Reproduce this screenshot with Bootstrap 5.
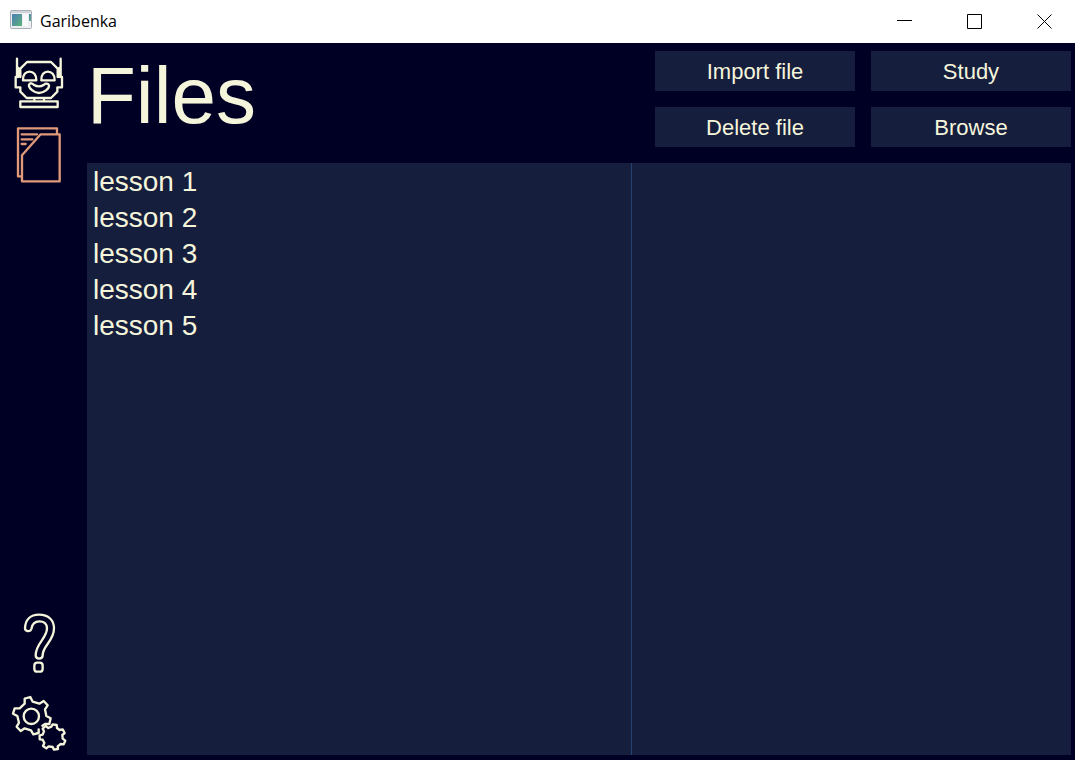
<!DOCTYPE html>
<html lang="en">
<head>
<meta charset="utf-8">
<meta name="viewport" content="width=device-width, initial-scale=1">
<title>Garibenka</title>
<link href="https://cdn.jsdelivr.net/npm/bootstrap@5.3.0/dist/css/bootstrap.min.css" rel="stylesheet">
<style>
:root { --ink: #000024; --panel: #151e3d; --cream: #f5f5dc; --active: #e09a7a; --divider: #24426f; }
body { background: var(--ink); color: var(--cream); font-family: "Liberation Sans", Arial, sans-serif; }
.titlebar { height: 43px; padding-bottom: 3px; background: #fff; color: #000; font-family: "Open Sans", "Noto Sans", sans-serif; font-size: 16px; }
.app-name { padding-top: 2px; }
.win-btn { width: 62px; height: 40px; background: none; }
.sidebar { width: 78px; padding: 5px 0 2px; }
.side-link { color: var(--cream); line-height: 0; }
.side-link.active { color: var(--active); }
.side-link svg { width: 70px; height: 70px; fill: none; stroke: currentColor; stroke-width: 7; stroke-linejoin: round; stroke-linecap: round; }
.workspace { padding: 0 4px 5px 9px; }
.topbar { height: 120px; }
.page-title { font-size: 80px; line-height: 106px; font-weight: 400; }
.actions { display: grid; grid-template-columns: 200px 200px; grid-auto-rows: 40px; gap: 16px; padding-top: 8px; }
.btn-tool { --bs-btn-color: var(--cream); --bs-btn-bg: var(--panel); --bs-btn-border-color: var(--panel); --bs-btn-hover-color: var(--cream); --bs-btn-hover-bg: #223060; --bs-btn-padding-x: 0; --bs-btn-padding-y: 0; --bs-btn-border-radius: 0; --bs-btn-border-width: 0; padding-top: 2px; font-size: 22px; line-height: 24px; }
.panes { background: var(--panel); }
.file-item { display: block; width: 100%; height: 36px; padding: 2px 6px 0; border: 0; background: none; color: var(--cream); font-size: 28px; line-height: 34px; text-align: left; }
.preview { width: 440px; border-left: 1px solid var(--divider); }
</style>
</head>
<body class="d-flex flex-column vh-100 overflow-hidden">
<header class="titlebar d-flex align-items-center gap-2 flex-shrink-0">
  <svg class="ms-2 flex-shrink-0" width="24" height="24" viewBox="1 0 24 24" aria-hidden="true">
    <defs>
      <linearGradient id="appFill" x1="0" y1="0" x2="1" y2="1"><stop offset="0" stop-color="#4a7db4"/><stop offset="1" stop-color="#5fb27c"/></linearGradient>
    </defs>
    <rect x="3.5" y="2.5" width="21" height="18" rx="1" fill="#eceef0" stroke="#a9afb8"/>
    <path d="M4 4h20" stroke="#d0d4da" stroke-width="2"/>
    <rect x="5" y="6" width="10" height="12" fill="url(#appFill)"/>
    <rect x="16" y="6" width="5" height="12" fill="#fafafa"/>
    <rect x="22" y="6" width="2" height="7" fill="url(#appFill)"/>
  </svg>
  <span class="app-name flex-grow-1">Garibenka</span>
  <button class="win-btn border-0 p-0" type="button" aria-label="Minimize"><svg width="15" height="15" viewBox="0 0 15 15" stroke="#000"><path d="M0 6.500h15"/></svg></button>
  <button class="win-btn border-0 p-0" type="button" aria-label="Maximize"><svg width="15" height="15" viewBox="0 0 15 15" fill="none" stroke="#000"><path d="M.5.5h14v14H.5z"/></svg></button>
  <button class="win-btn border-0 p-0" type="button" aria-label="Close"><svg width="15" height="15" viewBox="0 0 15 15" stroke="#000"><path d="M.5.5l14 14M14.500.5l-14 14"/></svg></button>
</header>

<div class="d-flex flex-grow-1">
  <nav class="sidebar d-flex flex-column align-items-center flex-shrink-0" aria-label="Main">
    <a class="side-link" href="#study" aria-label="Study">
      <svg viewBox="0 0 210 210">
        <path d="M39 32v55h-4v31h14v13l19 19h73l19-19v-13h14V87h-4V32"/>
        <path d="M43 60v27M166 60v27M49 87V62l20-20h72l20 20v25"/>
        <path d="M57 97c-3-35 42-35 40 0zM112 97c-3-35 42-35 40 0z"/>
        <path d="M75 110c4-6 9-5 14 0q16 10 31 0c5-5 13-4 15 2 2 10-16 23-30 23s-32-14-30-25z"/>
        <path d="M91 152v7M120 152v7M49 160h112v17H49z"/>
      </svg>
    </a>
    <a class="side-link active" href="#files" aria-label="Files" aria-current="page">
      <svg viewBox="0 0 210 210">
        <path d="M53 175H42V31h117v17M110 49h57v141H54v-78z"/>
        <path d="M53 49h46M53 64h32M53 78h12"/>
      </svg>
    </a>
    <a class="side-link mt-auto mb-2" href="#help" aria-label="Help">
      <svg viewBox="0 12 210 210">
        <path d="M63 67c1-25 16-41 42-41 29 0 45 17 45 41 0 40-34 50-34 81 0 13-21 13-21 0 0-37 34-50 34-81 0-13-9-21-23-21-15 0-22 9-24 23-3 9-19 8-19-2z"/>
        <path d="M100 170h7q9 0 9 9v9q0 9-9 9h-7q-9 0-9-9v-9q0-9 9-9z"/>
      </svg>
    </a>
    <a class="side-link" href="#settings" aria-label="Settings">
      <svg viewBox="0 0 210 210">
        <path d="M104 124l0 11-16 4-7-12-19-6-12 8-12-13 7-12-5-20-13-7 5-16h15l15-14V32l17-5 7 14 20 6 13-8 12 13-8 12 4 20 13 7-4 17h-13l-8 5"/>
        <circle cx="82" cy="85" r="23"/>
        <path d="M142 116l4-7 12 2 1 9 8 6 9-2 6 11-7 6 1 11 8 6-5 11-9-1-9 7 1 8-12 2-4-8-12-2-7 6-10-7 4-9-5-10-9-1v-12l9-2 4-10-4-8 9-8 8 6z"/>
      </svg>
    </a>
  </nav>

  <main class="workspace d-flex flex-column flex-grow-1">
    <div class="topbar d-flex justify-content-between">
      <h1 class="page-title m-0">Files</h1>
      <div class="actions">
        <button class="btn btn-tool" type="button">Import file</button>
        <button class="btn btn-tool" type="button">Study</button>
        <button class="btn btn-tool" type="button">Delete file</button>
        <button class="btn btn-tool" type="button">Browse</button>
      </div>
    </div>
    <div class="panes d-flex flex-grow-1">
      <ul class="list-unstyled m-0 flex-grow-1">
        <li><button class="file-item" type="button">lesson 1</button></li>
        <li><button class="file-item" type="button">lesson 2</button></li>
        <li><button class="file-item" type="button">lesson 3</button></li>
        <li><button class="file-item" type="button">lesson 4</button></li>
        <li><button class="file-item" type="button">lesson 5</button></li>
      </ul>
      <section class="preview flex-shrink-0" aria-label="File details"></section>
    </div>
  </main>
</div>
<script src="https://cdn.jsdelivr.net/npm/bootstrap@5.3.0/dist/js/bootstrap.bundle.min.js"></script>
</body>
</html>
